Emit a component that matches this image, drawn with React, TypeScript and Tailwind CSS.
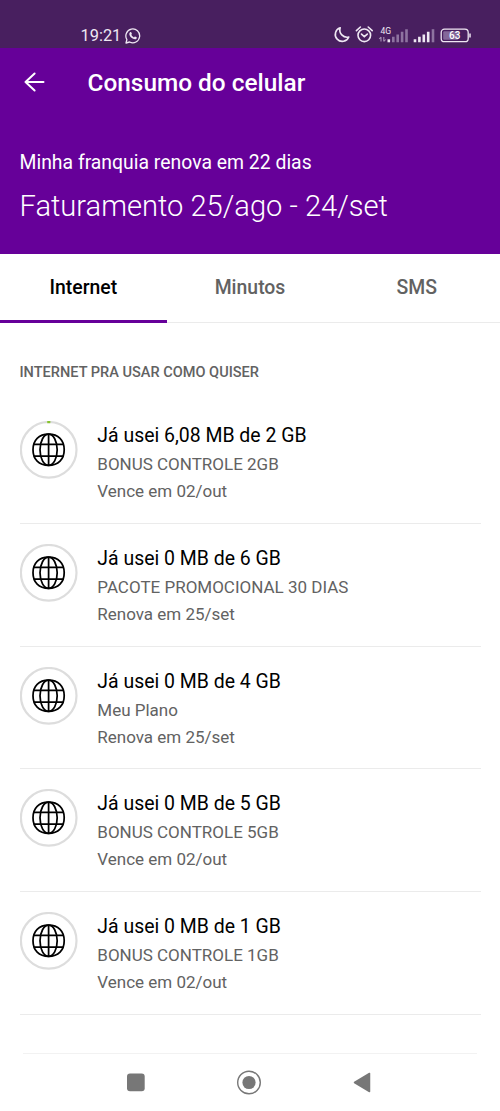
import React, { useState } from "react";

interface Usage {
  title: string;
  plan: string;
  due: string;
  used: number;
}

const usages: Usage[] = [
  {
    title: "Já usei 6,08 MB de 2 GB",
    plan: "BONUS CONTROLE 2GB",
    due: "Vence em 02/out",
    used: 6.08 / 2048,
  },
  {
    title: "Já usei 0 MB de 6 GB",
    plan: "PACOTE PROMOCIONAL 30 DIAS",
    due: "Renova em 25/set",
    used: 0,
  },
  {
    title: "Já usei 0 MB de 4 GB",
    plan: "Meu Plano",
    due: "Renova em 25/set",
    used: 0,
  },
  {
    title: "Já usei 0 MB de 5 GB",
    plan: "BONUS CONTROLE 5GB",
    due: "Vence em 02/out",
    used: 0,
  },
  {
    title: "Já usei 0 MB de 1 GB",
    plan: "BONUS CONTROLE 1GB",
    due: "Vence em 02/out",
    used: 0,
  },
];

const tabs = ["Internet", "Minutos", "SMS"];

const WhatsappIcon = () => (
  <svg className="w-4 h-4" viewBox="0 0 16 16" fill="none">
    <path
      d="M1 15l.9-3.5A6.9 6.9 0 1 1 4.6 14L1 15z"
      stroke="#efe8f3"
      strokeWidth="1.3"
      strokeLinejoin="round"
    />
    <path
      d="M5.1 4.3c.5-.5 1-.4 1.2.1l.6 1.3c.1.4-.4.8-.6 1.1.6 1.2 1.4 2 2.7 2.6.4-.3.7-.9 1.1-.8l1.4.7c.5.3.3.9-.1 1.4-.8.8-2 .7-3.3.1C6.3 10 5.1 8.7 4.5 7c-.4-1.2-.1-2.1.6-2.7z"
      fill="#efe8f3"
    />
  </svg>
);

const StatusIcons = () => (
  <svg
    className="w-[138px] h-[20px]"
    viewBox="0 0 138 20"
    fill="none"
    stroke="#efe8f3"
  >
    {/* moon */}
    <path
      d="M7.2 2.7A7 7 0 1 0 15.8 12A7.3 7.3 0 0 1 7.2 2.7Z"
      strokeWidth="1.6"
      strokeLinejoin="round"
    />
    {/* alarm */}
    <circle cx="31.3" cy="10.3" r="6.3" strokeWidth="1.6" />
    <path
      d="M28.5 9.1l2.8 2.5 3-2.5M23.4 5.6l4-3.6M39.2 5.6l-4-3.6"
      strokeWidth="1.6"
      strokeLinecap="round"
    />
    {/* 4G signal */}
    <text
      x="47.4"
      y="8.8"
      fontSize="8.6"
      fontFamily="Roboto, sans-serif"
      fill="#efe8f3"
      stroke="none"
    >
      4G
    </text>
    <path
      d="M48 16.5V12M46.2 14l1.8-2M50.8 12v4.5M52.6 14.5l-1.8 2"
      stroke="#a791b5"
      strokeWidth="1.1"
    />
    <path d="M55.8 17.3v-3" strokeWidth="2.6" />
    <path
      d="M60.3 17.3V11.8M64.7 17.3V9.4M69.1 17.3V6.8M73.5 17.3V4.2"
      stroke="#8e73a0"
      strokeWidth="2.6"
    />
    {/* second sim signal */}
    <path
      d="M82 17.3v-3M86.4 17.3V11.8M90.8 17.3V9.4M95.2 17.3V6.8"
      strokeWidth="2.6"
    />
    <path d="M100 17.3V4.2" stroke="#8e73a0" strokeWidth="2.6" />
    {/* battery */}
    <rect x="108.2" y="4.2" width="27" height="12.5" rx="3.3" strokeWidth="1.3" />
    <rect x="110.2" y="6.2" width="15" height="8.5" rx="1" fill="#84689a" stroke="none" />
    <path d="M137 8.5v4" strokeWidth="1.5" />
    <text
      x="121.8"
      y="14"
      textAnchor="middle"
      fontSize="10"
      fontWeight="500"
      fontFamily="Roboto, sans-serif"
      fill="#fff"
      stroke="none"
    >
      63
    </text>
  </svg>
);

const UsageRing: React.FC<{ used: number }> = ({ used }) => (
  <svg className="w-[58px] h-[58px] shrink-0" viewBox="0 0 58 58" fill="none">
    <circle cx="28.7" cy="28.8" r="27.8" stroke="#dddddd" strokeWidth="2.2" />
    {used > 0 && (
      <circle
        cx="28.7"
        cy="28.8"
        r="27.8"
        stroke="#86c32d"
        strokeWidth="2.4"
        pathLength={1}
        strokeDasharray="0.018 1"
        transform="rotate(-93 28.7 28.8)"
      />
    )}
    {/* globe, slightly squared off */}
    <g stroke="#000" strokeWidth="1.75" transform="translate(-0.4 -0.2)">
      <path d="M29 13.4C38.7 13.4 44.6 19.3 44.6 29S38.7 44.6 29 44.6S13.4 38.7 13.4 29S19.3 13.4 29 13.4Z" />
      <ellipse cx="29" cy="29" rx="8.6" ry="15.6" />
      <path d="M29 13.4v31.2M14.3 23.5h29.4M14.3 35.2h29.4" />
    </g>
  </svg>
);

const UsageItem: React.FC<{ usage: Usage }> = ({ usage }) => (
  <li className="flex h-[122.75px] border-b border-[#ebebeb] pt-5">
    <UsageRing used={usage.used} />
    <div className="ml-[19.8px] whitespace-nowrap text-[#626262]">
      <p className="mt-px text-[19.45px] leading-7 text-black">{usage.title}</p>
      <p className="text-[17px] leading-7">{usage.plan}</p>
      <p className="text-[17px] leading-[26.5px]">{usage.due}</p>
    </div>
  </li>
);

const App = () => {
  const [active, setActive] = useState("Internet");

  return (
    <div className="flex flex-col w-[500px] h-[1111px] overflow-hidden bg-white font-['Roboto',sans-serif]">
      <div className="flex h-[47.5px] shrink-0 items-start justify-between bg-[#481f5f] pl-[80.5px] pr-[29px] pt-[25px]">
        <div className="flex items-center gap-1 text-[16.4px] leading-5 text-[#efe8f3]">
          <span className="mt-px">19:21</span>
          <WhatsappIcon />
        </div>
        <StatusIcons />
      </div>

      <header className="h-[206.5px] shrink-0 bg-[#660099] px-[19.5px] text-white">
        <div className="flex h-[70px] items-center">
          <svg
            className="w-7 h-7 mb-[2px]"
            viewBox="0 0 28 28"
            fill="none"
            stroke="#fff"
            strokeWidth="2"
            strokeLinecap="round"
            strokeLinejoin="round"
          >
            <path d="M23.5 14H5.5M14.6 5.5L5.5 14l9.1 8.5" />
          </svg>
          <h1 className="ml-10 mt-[2px] text-[24.4px] font-medium">
            Consumo do celular
          </h1>
        </div>
        <p className="mt-[31px] text-[19.4px] leading-7">
          Minha franquia renova em 22 dias
        </p>
        <p className="mt-[9px] text-[29.1px] font-light leading-10">
          Faturamento 25/ago - 24/set
        </p>
      </header>

      <nav className="flex h-[69px] shrink-0 border-b border-[#ebebeb]">
        {tabs.map((tab) => (
          <button
            key={tab}
            className={`flex-1 h-[69px] border-b-[3px] pt-px text-[19.4px] font-medium ${
              active === tab
                ? "border-[#660099] text-black"
                : "border-transparent text-[#626262]"
            }`}
            onClick={() => setActive(tab)}
          >
            {tab}
          </button>
        ))}
      </nav>

      <main className="flex-1 pl-[19.5px] pr-[19px]">
        <h2 className="mt-[39.5px] mb-[18.7px] text-[14.55px] font-medium leading-5 text-[#626262]">
          INTERNET PRA USAR COMO QUISER
        </h2>
        <ul>
          {usages.map((usage) => (
            <UsageItem key={usage.plan} usage={usage} />
          ))}
        </ul>
      </main>

      <footer className="mx-[23px] h-[58px] shrink-0 border-t border-[#f2f2f2]">
        <svg className="w-[454px] h-[57px]" viewBox="0 0 454 57" fill="#777777">
          <rect x="104" y="19.5" width="17.7" height="17.7" rx="3" />
          <circle cx="226" cy="28.5" r="11.3" fill="none" stroke="#777777" strokeWidth="1.4" />
          <circle cx="226" cy="28.5" r="6.6" />
          <path
            d="M331.5 28.5l15-9v18z"
            stroke="#777777"
            strokeWidth="1.5"
            strokeLinejoin="round"
          />
        </svg>
      </footer>
    </div>
  );
};

export default App;
